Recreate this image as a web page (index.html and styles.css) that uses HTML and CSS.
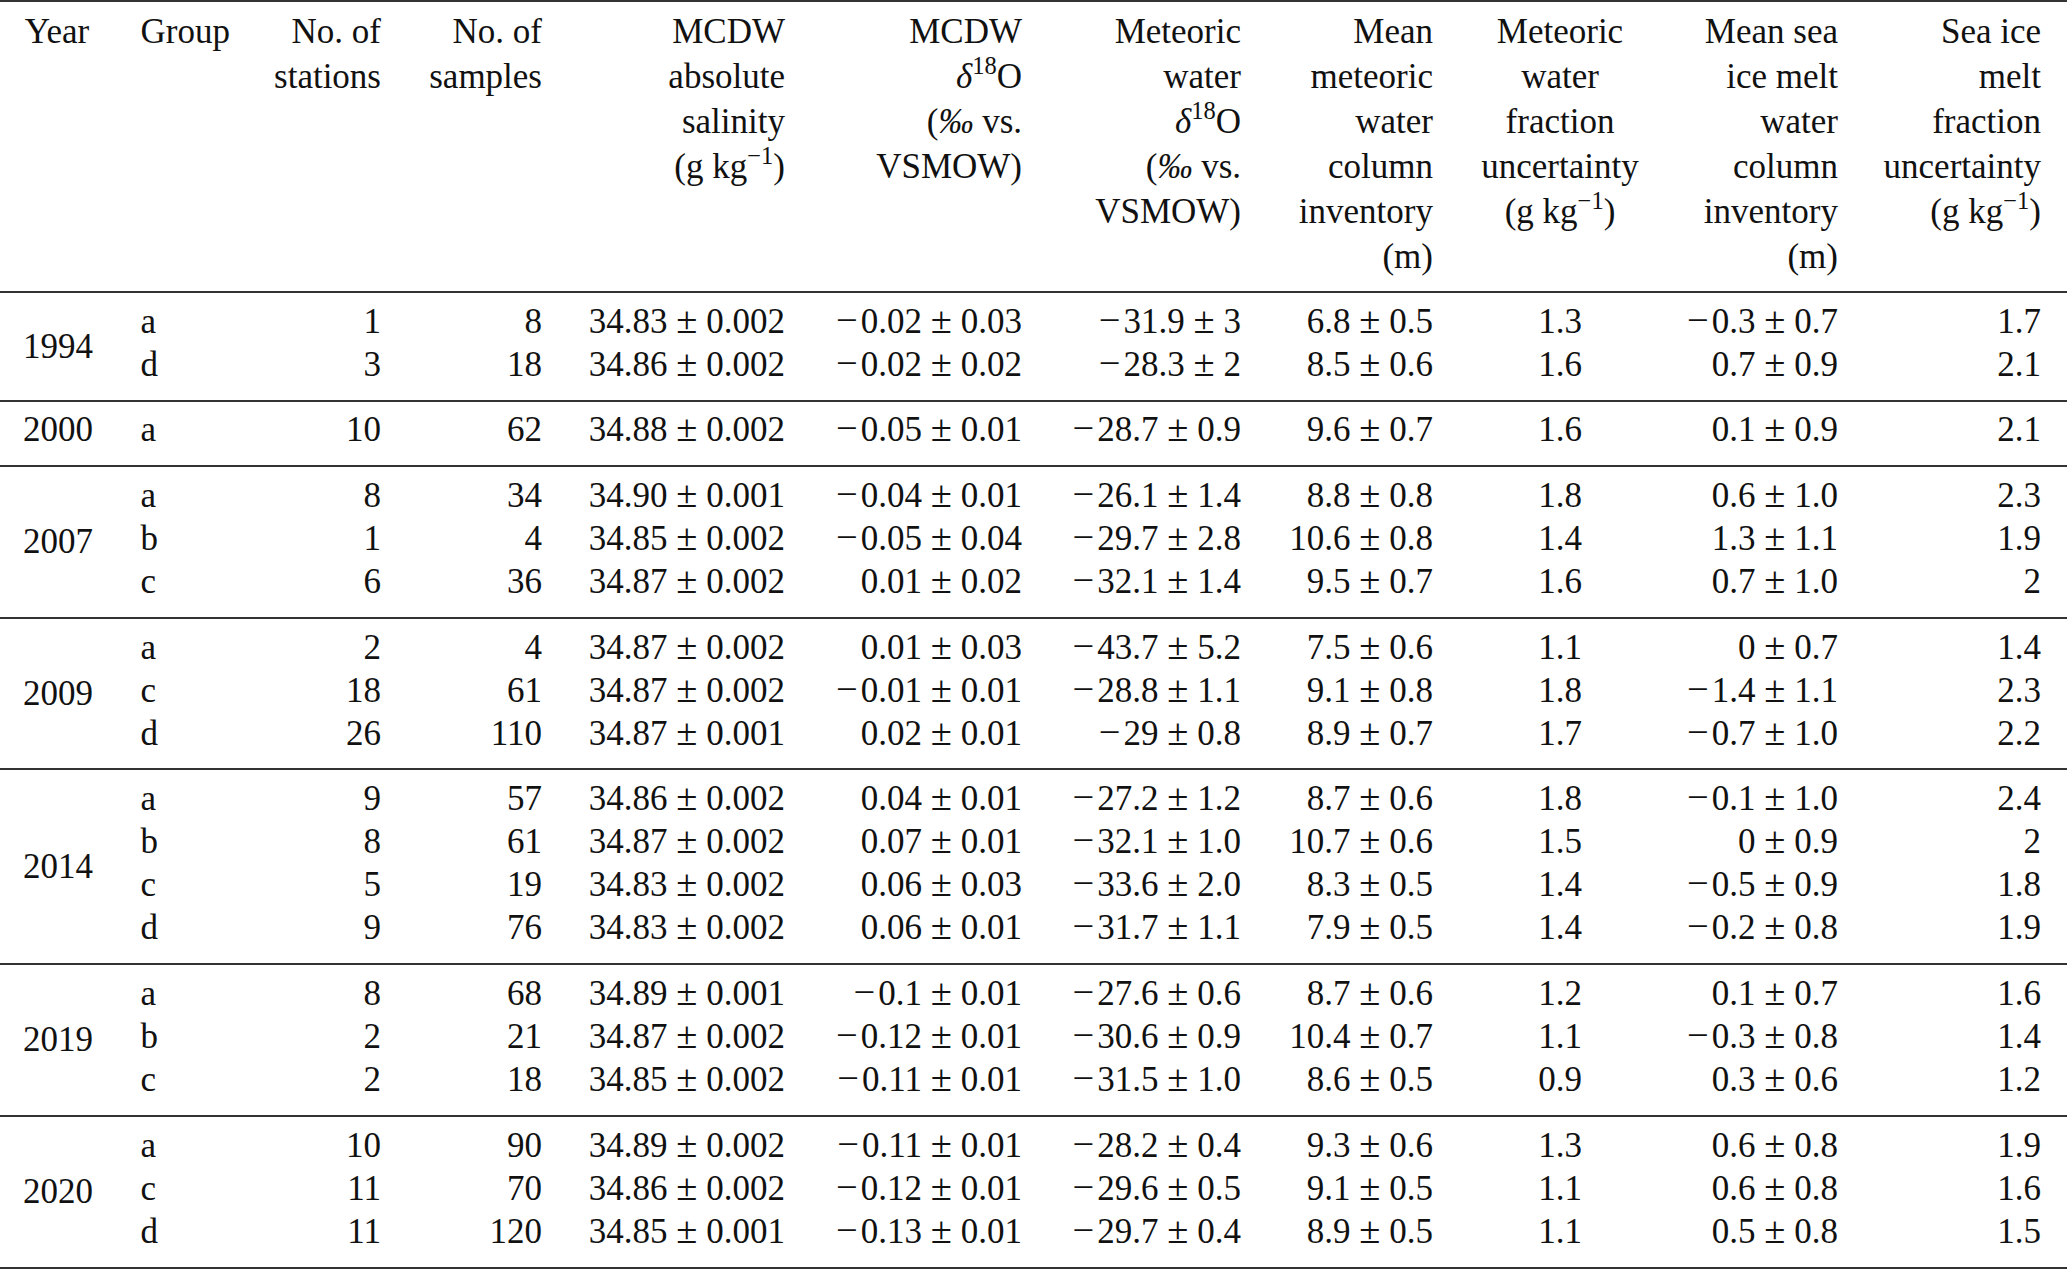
FILE: index.html
```html
<!DOCTYPE html>
<html lang="en">
<head>
<meta charset="utf-8">
<title>Table</title>
<link rel="stylesheet" href="styles.css">
</head>
<body>
<table class="tbl">
  <colgroup>
    <col class="c1"><col class="c2"><col class="c3"><col class="c4"><col class="c5"><col class="c6"><col class="c7"><col class="c8"><col class="c9"><col class="c10"><col class="c11">
  </colgroup>
  <thead>
    <tr>
      <th class="ctr">Year</th>
      <th class="lft">Group</th>
      <th>No. of<br>stations</th>
      <th>No. of<br>samples</th>
      <th>MCDW<br>absolute<br>salinity<br>(g kg<sup class="sup">−1</sup>)</th>
      <th>MCDW<br><i>δ</i><sup class="sup">18</sup>O<br>(<i>‰</i> vs.<br>VSMOW)</th>
      <th>Meteoric<br>water<br><i>δ</i><sup class="sup">18</sup>O<br>(<i>‰</i> vs.<br>VSMOW)</th>
      <th>Mean<br>meteoric<br>water<br>column<br>inventory<br>(m)</th>
      <th class="mid">Meteoric<br>water<br>fraction<br>uncertainty<br>(g kg<sup class="sup">−1</sup>)</th>
      <th>Mean sea<br>ice melt<br>water<br>column<br>inventory<br>(m)</th>
      <th>Sea ice<br>melt<br>fraction<br>uncertainty<br>(g kg<sup class="sup">−1</sup>)</th>
    </tr>
  </thead>
  <tbody>
    <tr><td class="yr" rowspan="2">1994</td><td class="lft">a</td><td>1</td><td>8</td><td>34.83<span class="pm">±</span>0.002</td><td><span class="mi">−</span>0.02<span class="pm">±</span>0.03</td><td><span class="mi">−</span>31.9<span class="pm">±</span>3</td><td>6.8<span class="pm">±</span>0.5</td><td class="mid">1.3</td><td><span class="mi">−</span>0.3<span class="pm">±</span>0.7</td><td>1.7</td></tr>
    <tr><td class="lft">d</td><td>3</td><td>18</td><td>34.86<span class="pm">±</span>0.002</td><td><span class="mi">−</span>0.02<span class="pm">±</span>0.02</td><td><span class="mi">−</span>28.3<span class="pm">±</span>2</td><td>8.5<span class="pm">±</span>0.6</td><td class="mid">1.6</td><td>0.7<span class="pm">±</span>0.9</td><td>2.1</td></tr>
  </tbody>
  <tbody>
    <tr><td class="yr">2000</td><td class="lft">a</td><td>10</td><td>62</td><td>34.88<span class="pm">±</span>0.002</td><td><span class="mi">−</span>0.05<span class="pm">±</span>0.01</td><td><span class="mi">−</span>28.7<span class="pm">±</span>0.9</td><td>9.6<span class="pm">±</span>0.7</td><td class="mid">1.6</td><td>0.1<span class="pm">±</span>0.9</td><td>2.1</td></tr>
  </tbody>
  <tbody>
    <tr><td class="yr" rowspan="3">2007</td><td class="lft">a</td><td>8</td><td>34</td><td>34.90<span class="pm">±</span>0.001</td><td><span class="mi">−</span>0.04<span class="pm">±</span>0.01</td><td><span class="mi">−</span>26.1<span class="pm">±</span>1.4</td><td>8.8<span class="pm">±</span>0.8</td><td class="mid">1.8</td><td>0.6<span class="pm">±</span>1.0</td><td>2.3</td></tr>
    <tr><td class="lft">b</td><td>1</td><td>4</td><td>34.85<span class="pm">±</span>0.002</td><td><span class="mi">−</span>0.05<span class="pm">±</span>0.04</td><td><span class="mi">−</span>29.7<span class="pm">±</span>2.8</td><td>10.6<span class="pm">±</span>0.8</td><td class="mid">1.4</td><td>1.3<span class="pm">±</span>1.1</td><td>1.9</td></tr>
    <tr><td class="lft">c</td><td>6</td><td>36</td><td>34.87<span class="pm">±</span>0.002</td><td>0.01<span class="pm">±</span>0.02</td><td><span class="mi">−</span>32.1<span class="pm">±</span>1.4</td><td>9.5<span class="pm">±</span>0.7</td><td class="mid">1.6</td><td>0.7<span class="pm">±</span>1.0</td><td>2</td></tr>
  </tbody>
  <tbody>
    <tr><td class="yr" rowspan="3">2009</td><td class="lft">a</td><td>2</td><td>4</td><td>34.87<span class="pm">±</span>0.002</td><td>0.01<span class="pm">±</span>0.03</td><td><span class="mi">−</span>43.7<span class="pm">±</span>5.2</td><td>7.5<span class="pm">±</span>0.6</td><td class="mid">1.1</td><td>0<span class="pm">±</span>0.7</td><td>1.4</td></tr>
    <tr><td class="lft">c</td><td>18</td><td>61</td><td>34.87<span class="pm">±</span>0.002</td><td><span class="mi">−</span>0.01<span class="pm">±</span>0.01</td><td><span class="mi">−</span>28.8<span class="pm">±</span>1.1</td><td>9.1<span class="pm">±</span>0.8</td><td class="mid">1.8</td><td><span class="mi">−</span>1.4<span class="pm">±</span>1.1</td><td>2.3</td></tr>
    <tr><td class="lft">d</td><td>26</td><td>110</td><td>34.87<span class="pm">±</span>0.001</td><td>0.02<span class="pm">±</span>0.01</td><td><span class="mi">−</span>29<span class="pm">±</span>0.8</td><td>8.9<span class="pm">±</span>0.7</td><td class="mid">1.7</td><td><span class="mi">−</span>0.7<span class="pm">±</span>1.0</td><td>2.2</td></tr>
  </tbody>
  <tbody>
    <tr><td class="yr" rowspan="4">2014</td><td class="lft">a</td><td>9</td><td>57</td><td>34.86<span class="pm">±</span>0.002</td><td>0.04<span class="pm">±</span>0.01</td><td><span class="mi">−</span>27.2<span class="pm">±</span>1.2</td><td>8.7<span class="pm">±</span>0.6</td><td class="mid">1.8</td><td><span class="mi">−</span>0.1<span class="pm">±</span>1.0</td><td>2.4</td></tr>
    <tr><td class="lft">b</td><td>8</td><td>61</td><td>34.87<span class="pm">±</span>0.002</td><td>0.07<span class="pm">±</span>0.01</td><td><span class="mi">−</span>32.1<span class="pm">±</span>1.0</td><td>10.7<span class="pm">±</span>0.6</td><td class="mid">1.5</td><td>0<span class="pm">±</span>0.9</td><td>2</td></tr>
    <tr><td class="lft">c</td><td>5</td><td>19</td><td>34.83<span class="pm">±</span>0.002</td><td>0.06<span class="pm">±</span>0.03</td><td><span class="mi">−</span>33.6<span class="pm">±</span>2.0</td><td>8.3<span class="pm">±</span>0.5</td><td class="mid">1.4</td><td><span class="mi">−</span>0.5<span class="pm">±</span>0.9</td><td>1.8</td></tr>
    <tr><td class="lft">d</td><td>9</td><td>76</td><td>34.83<span class="pm">±</span>0.002</td><td>0.06<span class="pm">±</span>0.01</td><td><span class="mi">−</span>31.7<span class="pm">±</span>1.1</td><td>7.9<span class="pm">±</span>0.5</td><td class="mid">1.4</td><td><span class="mi">−</span>0.2<span class="pm">±</span>0.8</td><td>1.9</td></tr>
  </tbody>
  <tbody>
    <tr><td class="yr" rowspan="3">2019</td><td class="lft">a</td><td>8</td><td>68</td><td>34.89<span class="pm">±</span>0.001</td><td><span class="mi">−</span>0.1<span class="pm">±</span>0.01</td><td><span class="mi">−</span>27.6<span class="pm">±</span>0.6</td><td>8.7<span class="pm">±</span>0.6</td><td class="mid">1.2</td><td>0.1<span class="pm">±</span>0.7</td><td>1.6</td></tr>
    <tr><td class="lft">b</td><td>2</td><td>21</td><td>34.87<span class="pm">±</span>0.002</td><td><span class="mi">−</span>0.12<span class="pm">±</span>0.01</td><td><span class="mi">−</span>30.6<span class="pm">±</span>0.9</td><td>10.4<span class="pm">±</span>0.7</td><td class="mid">1.1</td><td><span class="mi">−</span>0.3<span class="pm">±</span>0.8</td><td>1.4</td></tr>
    <tr><td class="lft">c</td><td>2</td><td>18</td><td>34.85<span class="pm">±</span>0.002</td><td><span class="mi">−</span>0.11<span class="pm">±</span>0.01</td><td><span class="mi">−</span>31.5<span class="pm">±</span>1.0</td><td>8.6<span class="pm">±</span>0.5</td><td class="mid">0.9</td><td>0.3<span class="pm">±</span>0.6</td><td>1.2</td></tr>
  </tbody>
  <tbody>
    <tr><td class="yr" rowspan="3">2020</td><td class="lft">a</td><td>10</td><td>90</td><td>34.89<span class="pm">±</span>0.002</td><td><span class="mi">−</span>0.11<span class="pm">±</span>0.01</td><td><span class="mi">−</span>28.2<span class="pm">±</span>0.4</td><td>9.3<span class="pm">±</span>0.6</td><td class="mid">1.3</td><td>0.6<span class="pm">±</span>0.8</td><td>1.9</td></tr>
    <tr><td class="lft">c</td><td>11</td><td>70</td><td>34.86<span class="pm">±</span>0.002</td><td><span class="mi">−</span>0.12<span class="pm">±</span>0.01</td><td><span class="mi">−</span>29.6<span class="pm">±</span>0.5</td><td>9.1<span class="pm">±</span>0.5</td><td class="mid">1.1</td><td>0.6<span class="pm">±</span>0.8</td><td>1.6</td></tr>
    <tr><td class="lft">d</td><td>11</td><td>120</td><td>34.85<span class="pm">±</span>0.001</td><td><span class="mi">−</span>0.13<span class="pm">±</span>0.01</td><td><span class="mi">−</span>29.7<span class="pm">±</span>0.4</td><td>8.9<span class="pm">±</span>0.5</td><td class="mid">1.1</td><td>0.5<span class="pm">±</span>0.8</td><td>1.5</td></tr>
  </tbody>
</table>
</body>
</html>
```

FILE: styles.css
```css
html, body {
  margin: 0;
  padding: 0;
  background: #ffffff;
}

body {
  font-family: "Liberation Serif", "Times New Roman", serif;
  font-size: 35px;
  color: #111111;
}

.tbl {
  width: 2067px;
  table-layout: fixed;
  border-collapse: separate;
  border-spacing: 0;
}

.c1 { width: 114px; }
.c2 { width: 142px; }
.c3 { width: 151px; }
.c4 { width: 161px; }
.c5 { width: 243px; }
.c6 { width: 237px; }
.c7 { width: 219px; }
.c8 { width: 192px; }
.c9 { width: 202px; }
.c10 { width: 203px; }
.c11 { width: 203px; }

.tbl th {
  font-weight: normal;
  line-height: 45px;
  padding: 7px 26px 12px 0;
  vertical-align: top;
  white-space: nowrap;
  text-align: right;
  border-top: 2px solid #333333;
  border-bottom: 2px solid #333333;
}

.tbl td {
  line-height: 43.1px;
  padding: 0 26px 0 0;
  white-space: nowrap;
  text-align: right;
  vertical-align: top;
}

.tbl tbody tr:first-child td {
  padding-top: 6.8px;
}

.tbl tbody tr:last-child td {
  padding-bottom: 13.6px;
  border-bottom: 2px solid #333333;
}

.tbl tbody td.yr {
  padding: 0 0 6.8px 2px;
  text-align: center;
  vertical-align: middle;
  border-bottom: 2px solid #333333;
}

.tbl .ctr {
  text-align: center;
  padding-left: 0;
  padding-right: 0;
}

.tbl .lft {
  text-align: left;
  padding-left: 26.5px;
  padding-right: 0;
}

.tbl .mid {
  text-align: center;
  padding-left: 0;
  padding-right: 0;
}

.sup {
  font-size: 0.7em;
  line-height: 0;
  vertical-align: baseline;
  position: relative;
  top: -0.57em;
}

.pm {
  font-size: 1.1em;
  line-height: 0;
  margin: 0 0.23em;
}

.mi {
  font-size: 1.1em;
  line-height: 0;
  margin-right: 0.08em;
}
```
